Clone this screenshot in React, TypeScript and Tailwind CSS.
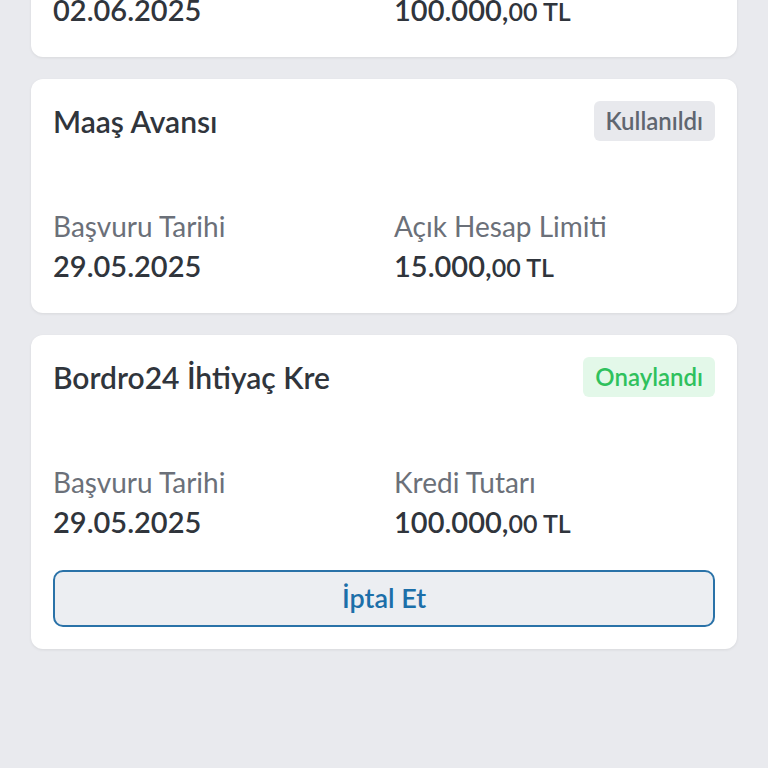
import React from 'react';

type Status = 'used' | 'approved';

interface Application {
  title: string;
  status: Status;
  date: string;
  amountLabel: string;
  amountMain: string;
  amountCents: string;
  cancellable?: boolean;
}

const applications: Application[] = [
  {
    title: 'Bordro24 İhtiyaç Kredisi',
    status: 'used',
    date: '02.06.2025',
    amountLabel: 'Kredi Tutarı',
    amountMain: '100.000,',
    amountCents: '00 TL',
  },
  {
    title: 'Maaş Avansı',
    status: 'used',
    date: '29.05.2025',
    amountLabel: 'Açık Hesap Limiti',
    amountMain: '15.000,',
    amountCents: '00 TL',
  },
  {
    title: 'Bordro24 İhtiyaç Kre',
    status: 'approved',
    date: '29.05.2025',
    amountLabel: 'Kredi Tutarı',
    amountMain: '100.000,',
    amountCents: '00 TL',
    cancellable: true,
  },
];

function StatusBadge({ status }: { status: Status }) {
  if (status === 'approved') {
    return (
      <span className="rounded-md bg-[#e3f8e9] px-3 h-10 flex items-center text-[24px] font-semibold text-[#2fc15d]">
        Onaylandı
      </span>
    );
  }
  return (
    <span className="rounded-md bg-[#e8e9ed] px-3 h-10 flex items-center text-[24px] font-semibold text-[#5f6670]">
      Kullanıldı
    </span>
  );
}

function ApplicationCard({ app }: { app: Application }) {
  return (
    <div className="bg-white rounded-xl shadow-[0_1px_3px_rgba(0,0,0,0.08)] px-[22px] pt-[22px] pb-[22px]">
      <div className="flex items-start justify-between">
        <h3 className="-mt-[2px] text-[30px] leading-[44px] font-semibold text-[#30353c]">{app.title}</h3>
        <StatusBadge status={app.status} />
      </div>
      <div className="grid grid-cols-2 gap-5 mt-[66px] pb-[5px]">
        <div>
          <div className="text-[28px] leading-[34px] text-[#6b7079]">Başvuru Tarihi</div>
          <div className="mt-[4px] text-[29px] leading-[38px] font-semibold text-[#30353c]">{app.date}</div>
        </div>
        <div>
          <div className="text-[28px] leading-[34px] text-[#6b7079]">{app.amountLabel}</div>
          <div className="mt-[4px] text-[29px] leading-[38px] font-semibold text-[#30353c]">
            {app.amountMain}
            <span className="text-[25px]">{app.amountCents}</span>
          </div>
        </div>
      </div>
      {app.cancellable && (
        <button className="mt-[23px] w-full h-[57px] rounded-[10px] border-2 border-[#2a72a8] bg-[#eceef2] text-[27px] font-semibold text-[#1c6fa9]">
          İptal Et
        </button>
      )}
    </div>
  );
}

export default function App() {
  return (
    <div
      className="min-h-screen bg-[#e9eaee] overflow-hidden"
      style={{ fontFamily: '"Source Sans Pro", Lato, "Noto Sans", sans-serif' }}
    >
      <div className="flex flex-col gap-[22px] px-[31px] -mt-[177px] pb-10">
        {applications.map((app, i) => (
          <ApplicationCard key={i} app={app} />
        ))}
      </div>
    </div>
  );
}
